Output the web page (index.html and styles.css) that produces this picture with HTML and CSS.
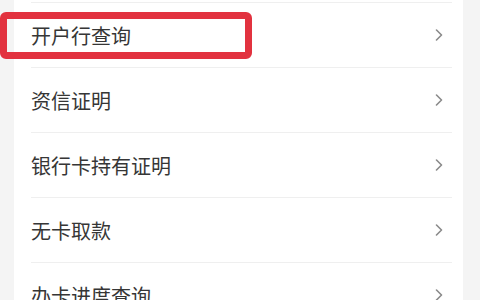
FILE: index.html
```html
<!DOCTYPE html>
<html lang="zh">
<head>
<meta charset="utf-8">
<link rel="stylesheet" href="styles.css">
</head>
<body>
<div class="page">
  <div class="card">
    <ul class="list">
      <li class="item"><span class="label">开户行查询</span><svg class="chev" viewBox="0 0 8 12" width="8" height="12"><polyline points="1.5,1 6.5,6 1.5,11" /></svg></li>
      <li class="item"><span class="label">资信证明</span><svg class="chev" viewBox="0 0 8 12" width="8" height="12"><polyline points="1.5,1 6.5,6 1.5,11" /></svg></li>
      <li class="item"><span class="label">银行卡持有证明</span><svg class="chev" viewBox="0 0 8 12" width="8" height="12"><polyline points="1.5,1 6.5,6 1.5,11" /></svg></li>
      <li class="item"><span class="label">无卡取款</span><svg class="chev" viewBox="0 0 8 12" width="8" height="12"><polyline points="1.5,1 6.5,6 1.5,11" /></svg></li>
      <li class="item"><span class="label">办卡进度查询</span><svg class="chev" viewBox="0 0 8 12" width="8" height="12"><polyline points="1.5,1 6.5,6 1.5,11" /></svg></li>
    </ul>
  </div>
  <div class="highlight"></div>
</div>
</body>
</html>
```
FILE: styles.css
```css
html, body {
  margin: 0;
  padding: 0;
  background: #f4f4f4;
}
.page {
  position: relative;
  width: 480px;
  height: 300px;
  overflow: hidden;
  font-family: "Noto Sans CJK SC", "Noto Sans", sans-serif;
}
.card {
  margin: 0 17px 0 14px;
  background: #ffffff;
  height: 300px;
  padding-top: 2px;
  box-sizing: border-box;
}
.list {
  list-style: none;
  margin: 0;
  padding: 0;
}
.item {
  display: flex;
  align-items: center;
  justify-content: space-between;
  height: 64px;
  margin: 0 11px 0 17px;
  border-top: 1px solid #efefef;
  padding-right: 9px;
}
.label {
  font-size: 20px;
  color: #363636;
  letter-spacing: 0;
  line-height: 1;
  margin-top: 2px;
}
.chev {
  fill: none;
  stroke: #8a8a8a;
  stroke-width: 1.6;
  stroke-linecap: round;
  stroke-linejoin: round;
}
.highlight {
  position: absolute;
  left: 0;
  top: 12px;
  width: 252px;
  height: 47px;
  box-sizing: border-box;
  border: 7px solid #e2323f;
  border-radius: 6px;
}
```
